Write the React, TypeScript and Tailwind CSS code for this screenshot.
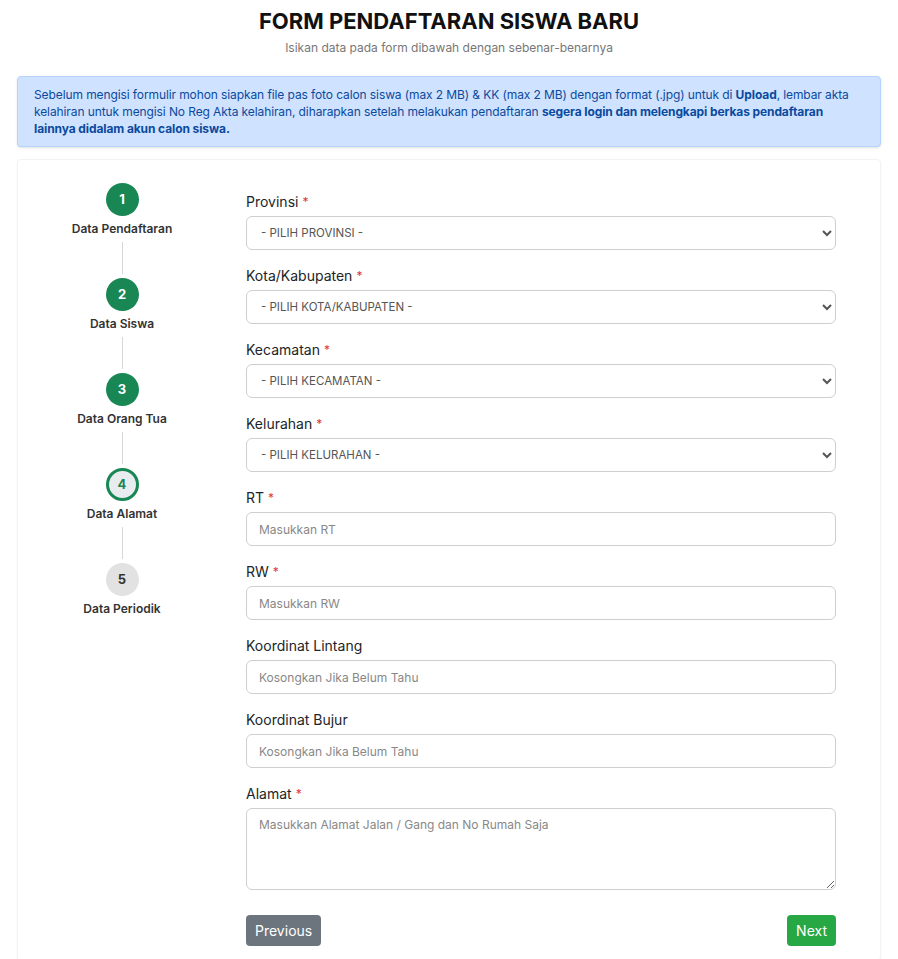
import React from "react";

const steps = [
  { no: 1, label: "Data Pendaftaran", state: "done" },
  { no: 2, label: "Data Siswa", state: "done" },
  { no: 3, label: "Data Orang Tua", state: "done" },
  { no: 4, label: "Data Alamat", state: "active" },
  { no: 5, label: "Data Periodik", state: "todo" },
];

const selects = [
  { label: "Provinsi", placeholder: "- PILIH PROVINSI -" },
  { label: "Kota/Kabupaten", placeholder: "- PILIH KOTA/KABUPATEN -" },
  { label: "Kecamatan", placeholder: "- PILIH KECAMATAN -" },
  { label: "Kelurahan", placeholder: "- PILIH KELURAHAN -" },
];

const inputs = [
  { label: "RT", placeholder: "Masukkan RT", required: true },
  { label: "RW", placeholder: "Masukkan RW", required: true },
  { label: "Koordinat Lintang", placeholder: "Kosongkan Jika Belum Tahu", required: false },
  { label: "Koordinat Bujur", placeholder: "Kosongkan Jika Belum Tahu", required: false },
];

const Label = ({ text, required }: { text: string; required?: boolean }) => (
  <label className="flex items-center h-[20px] text-[14px] leading-[20px] text-[#212529] mb-[4px]">
    {text}
    {required && <span className="text-[#dc3545] text-[12px] leading-none ml-[4px]">*</span>}
  </label>
);

const Stepper = () => (
  <div className="w-[208px] shrink-0 flex flex-col items-center pt-[23px]">
    {steps.map((s, i) => (
      <div key={s.no} className="flex flex-col items-center">
        {s.state === "done" && (
          <div className="w-[33px] h-[33px] rounded-full bg-[#198754] text-white flex items-center justify-center text-[13px] font-bold">
            {s.no}
          </div>
        )}
        {s.state === "active" && (
          <div className="w-[33px] h-[33px] rounded-full bg-[#e9ecef] border-[3px] border-[#198754] text-[#198754] flex items-center justify-center text-[13px] font-bold">
            {s.no}
          </div>
        )}
        {s.state === "todo" && (
          <div className="w-[33px] h-[33px] rounded-full bg-[#e2e2e2] text-[#333] flex items-center justify-center text-[13px] font-bold">
            {s.no}
          </div>
        )}
        <div className="mt-[5px] text-[12px] leading-[16px] font-semibold text-[#333] whitespace-nowrap">
          {s.label}
        </div>
        {i < steps.length - 1 && <div className="w-px h-[32px] bg-[#d6d6d6] mt-[5px] mb-[4px]" />}
      </div>
    ))}
  </div>
);

export default function App() {
  const [form, setForm] = React.useState({ alamat: "" });

  return (
    <div className="min-h-screen bg-white" style={{ fontFamily: "Inter, 'Liberation Sans', sans-serif" }}>
      <div className="px-[17px] pt-[8px] pb-[20px]">
        <div className="text-center">
          <h1 className="text-[22px] leading-[26px] font-bold text-[#111]">FORM PENDAFTARAN SISWA BARU</h1>
          <p className="mt-[6px] text-[12px] leading-[16px] text-[#777]">Isikan data pada form dibawah dengan sebenar-benarnya</p>
        </div>

        <div className="mt-[20px] bg-[#cfe2ff] border border-[#b6d4fe] rounded-[4px] px-[16px] py-[9px] text-[12px] tracking-[-0.1px] leading-[17px] text-[#0a4a9e] shadow-sm whitespace-nowrap">
          Sebelum mengisi formulir mohon siapkan file pas foto calon siswa (max 2 MB) &amp; KK (max 2 MB) dengan format (.jpg) untuk di{" "}
          <b>Upload</b>, lembar akta
          <br />
          kelahiran untuk mengisi No Reg Akta kelahiran, diharapkan setelah melakukan pendaftaran{" "}
          <b>segera login dan melengkapi berkas pendaftaran</b>
          <br />
          <b>lainnya didalam akun calon siswa.</b>
        </div>

        <div className="mt-[12px] bg-white border border-[#f3f3f3] rounded-[4px] shadow-[0_1px_3px_rgba(0,0,0,0.04)] flex pr-[44px]">
          <Stepper />
          <div className="flex-1 ml-[20px] pt-[32px]">
            {selects.map((s) => (
              <div key={s.label} className="mb-[16px]">
                <Label text={s.label} required />
                <select className="block w-full h-[34px] border border-[#cfcfcf] rounded-[6px] pl-[10px] pr-[6px] text-[11.5px] text-[#555] bg-white">
                  <option>{s.placeholder}</option>
                </select>
              </div>
            ))}
            {inputs.map((f) => (
              <div key={f.label} className="mb-[16px]">
                <Label text={f.label} required={f.required} />
                <input
                  type="text"
                  placeholder={f.placeholder}
                  className="block w-full h-[34px] border border-[#cfcfcf] rounded-[6px] px-[12px] text-[12px] text-[#333] placeholder:text-[#888] outline-none"
                />
              </div>
            ))}
            <div>
              <Label text="Alamat" required />
              <textarea
                value={form.alamat}
                onChange={(e) => setForm({ ...form, alamat: e.target.value })}
                placeholder="Masukkan Alamat Jalan / Gang dan No Rumah Saja"
                className="block w-full h-[82px] border border-[#cfcfcf] rounded-[6px] px-[12px] py-[8px] text-[12px] leading-[16px] placeholder:text-[#888] outline-none"
              />
            </div>
            <div className="flex justify-between mt-[25px] pb-[14px]">
              <button className="h-[31px] px-[9px] rounded-[4px] bg-[#6c757d] text-white text-[14px]">Previous</button>
              <button className="h-[31px] px-[9px] rounded-[4px] bg-[#28a745] text-white text-[14px]">Next</button>
            </div>
          </div>
        </div>
      </div>
    </div>
  );
}
